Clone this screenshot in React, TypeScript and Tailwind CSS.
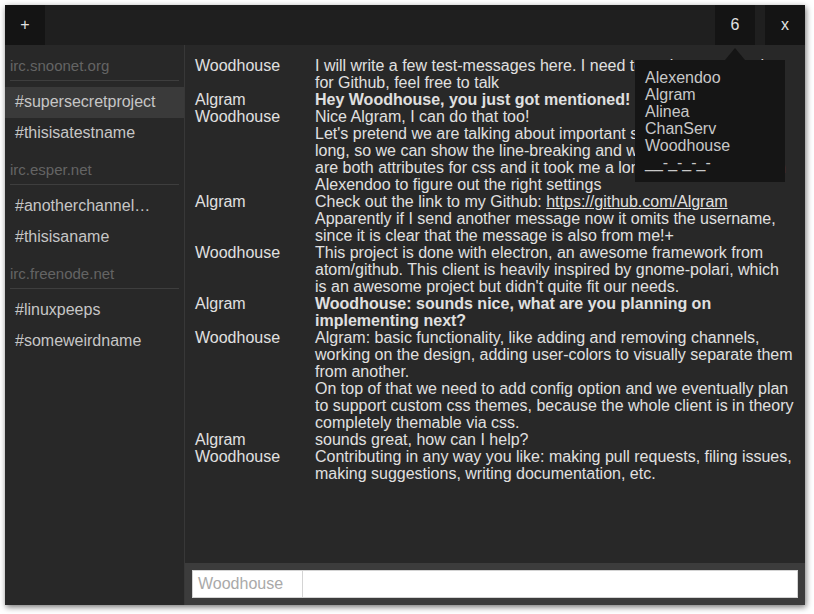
import React from 'react';

type Channel = { name: string; active?: boolean };
type Server = { host: string; channels: Channel[] };
type Msg = { nick?: string; text: React.ReactNode; bold?: boolean };

const servers: Server[] = [
  {
    host: 'irc.snoonet.org',
    channels: [{ name: '#supersecretproject', active: true }, { name: '#thisisatestname' }],
  },
  {
    host: 'irc.esper.net',
    channels: [{ name: '#anotherchannelwithaverylongname' }, { name: '#thisisaname' }],
  },
  {
    host: 'irc.freenode.net',
    channels: [{ name: '#linuxpeeps' }, { name: '#someweirdname' }],
  },
];

const users = ['Alexendoo', 'Algram', 'Alinea', 'ChanServ', 'Woodhouse', '__-_-_-_-'];

const messages: Msg[] = [
  {
    nick: 'Woodhouse',
    text: 'I will write a few test-messages here. I need to make a screenshot for Github, feel free to talk',
  },
  { nick: 'Algram', text: 'Hey Woodhouse, you just got mentioned!', bold: true },
  { nick: 'Woodhouse', text: 'Nice Algram, I can do that too!' },
  {
    text: "Let's pretend we are talking about important stuff, and this is really long, so we can show the line-breaking and word-wrapping, which are both attributes for css and it took me a long time and help from Alexendoo to figure out the right settings",
  },
  {
    nick: 'Algram',
    text: (
      <>
        Check out the link to my Github: <a className="underline">https://github.com/Algram</a>
      </>
    ),
  },
  {
    text: 'Apparently if I send another message now it omits the username, since it is clear that the message is also from me!+',
  },
  {
    nick: 'Woodhouse',
    text: "This project is done with electron, an awesome framework from atom/github. This client is heavily inspired by gnome-polari, which is an awesome project but didn't quite fit our needs.",
  },
  {
    nick: 'Algram',
    text: 'Woodhouse: sounds nice, what are you planning on implementing next?',
    bold: true,
  },
  {
    nick: 'Woodhouse',
    text: 'Algram: basic functionality, like adding and removing channels, working on the design, adding user-colors to visually separate them from another.',
  },
  {
    text: 'On top of that we need to add config option and we eventually plan to support custom css themes, because the whole client is in theory completely themable via css.',
  },
  { nick: 'Algram', text: 'sounds great, how can I help?' },
  {
    nick: 'Woodhouse',
    text: 'Contributing in any way you like: making pull requests, filing issues, making suggestions, writing documentation, etc.',
  },
];

export default function App() {
  return (
    <div className="h-[614px] w-[814px] bg-white p-[5px] font-['Liberation_Sans',Arial,sans-serif]">
      <div className="flex h-[600px] w-[800px] flex-col bg-[#282828] shadow-[1px_2px_6px_rgba(0,0,0,0.55)]">
        {/* Barra superior */}
        <header className="flex h-[40px] shrink-0 bg-[#1f1f1f] text-[16px] text-[#e2e2e2]">
          <button className="h-full w-[40px] bg-[#141414]">+</button>
          <div className="flex-1" />
          <div className="relative">
            <button className="h-full w-[40px] bg-[#141414]">6</button>
            <div className="absolute left-[-80px] top-[55px] z-10 w-[150px] bg-[#151515] px-[10px] pb-[11px] pt-[9px] leading-[17px] text-[#c8c8c8]">
              <div className="absolute left-[90px] top-[-12px] h-0 w-0 border-b-[12px] border-l-[10px] border-r-[10px] border-b-[#151515] border-l-transparent border-r-transparent" />
              {users.map((u) => (
                <div key={u}>{u}</div>
              ))}
            </div>
          </div>
          <div className="w-[10px]" />
          <button className="h-full w-[40px] bg-[#141414]">x</button>
        </header>

        <div className="flex min-h-0 flex-1">
          {/* Sidebar de servidores */}
          <aside className="w-[180px] shrink-0 border-r border-[#383838] bg-[#282828]">
            {servers.map((s) => (
              <div key={s.host}>
                <div className="mx-[5px] mb-[6px] border-b border-[#3e3e3e] pb-[5px] pt-[12px] text-[15px] leading-[18px] text-[#646464]">
                  {s.host}
                </div>
                {s.channels.map((c) => (
                  <div
                    key={c.name}
                    className={`h-[31px] truncate pl-[10px] pr-[28px] text-[16px] leading-[30px] text-[#c6c6c6] ${
                      c.active ? 'bg-[#3a3a3a]' : ''
                    }`}
                  >
                    {c.name}
                  </div>
                ))}
              </div>
            ))}
          </aside>

          {/* Mensajes */}
          <main className="flex min-w-0 flex-1 flex-col">
            <div className="flex-1 overflow-hidden pl-[10px] pt-[12px] text-[16px] leading-[17px] text-[#e0e0e0]">
              {messages.map((m, i) => (
                <div key={i} className="flex">
                  <div className="w-[120px] shrink-0">{m.nick}</div>
                  <div className={`w-[479px] ${m.bold ? 'font-bold' : ''}`}>{m.text}</div>
                </div>
              ))}
            </div>

            <div className="shrink-0 bg-[#3c3c3c] p-[7px]">
              <div className="flex h-[28px] border border-[#d4d4d4] bg-white text-[16px]">
                <div className="w-[110px] shrink-0 border-r border-[#d4d4d4] pl-[5px] leading-[26px] text-[#a9a9a9]">
                  Woodhouse
                </div>
                <input className="min-w-0 flex-1 bg-white px-[5px] outline-none" />
              </div>
            </div>
          </main>
        </div>
      </div>
    </div>
  );
}
